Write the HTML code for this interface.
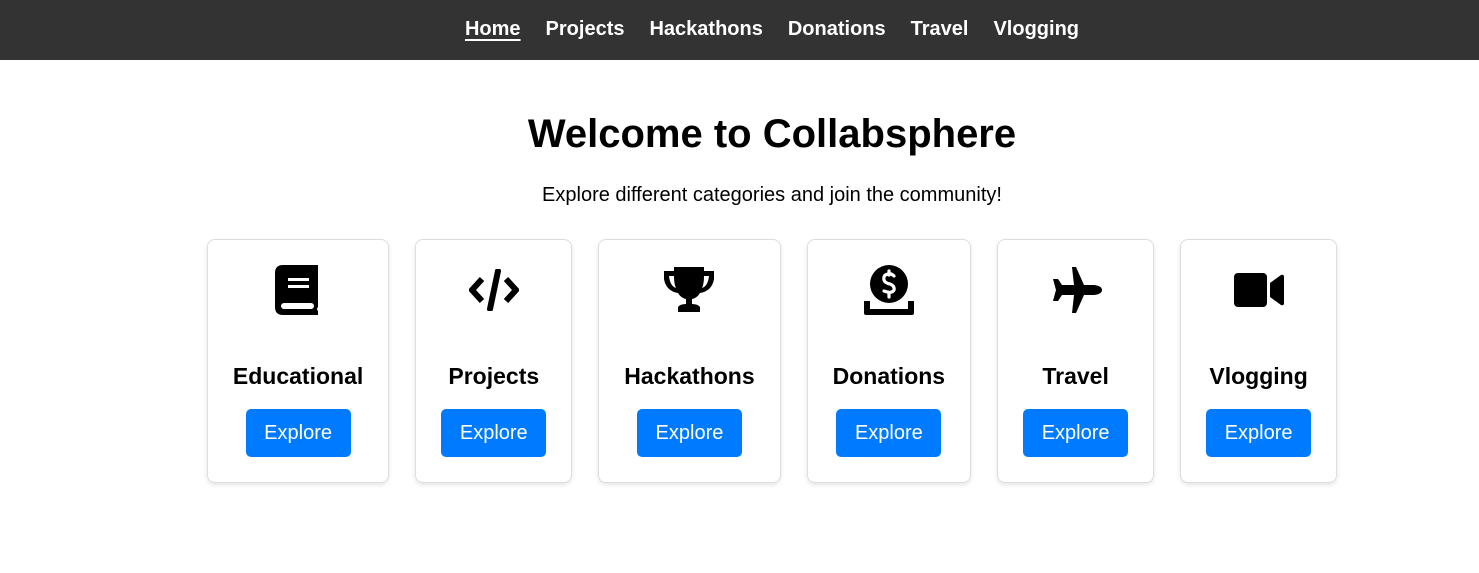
<!DOCTYPE html>
<html><head><meta charset="utf-8"><style>
*{margin:0;padding:0;box-sizing:border-box}
body{width:1479px;height:573px;overflow:hidden;background:#fff;font-family:"Liberation Sans",Arial,sans-serif;color:#000}
nav{height:60px;background:#333;position:relative}
.w{position:absolute;left:0;width:1544px;text-align:center}
nav .w{top:18px;font-size:20px;font-weight:bold;white-space:nowrap}
nav a{color:#fff;text-decoration:none;margin:0 12.5px}
nav a.h{text-decoration:underline;text-underline-offset:4px}
h1{position:absolute;top:112px;font-size:40px;line-height:44px}
p.s{position:absolute;top:184px;font-size:20px;line-height:22px}
.cards{position:absolute;top:239px;left:0;width:1544px;display:flex;justify-content:center;gap:26px}
.c{border:1px solid #ddd;border-radius:8px;box-shadow:0 2px 4px rgba(0,0,0,.1);padding:0 25px 24px;text-align:center;height:244px}
.ic{height:50px;margin-top:25px;display:flex;justify-content:center;align-items:center}
.c h3{font-size:23px;line-height:26px;margin-top:48px;white-space:nowrap}
.b{display:inline-block;margin-top:20px;background:#007bff;color:#fff;font-size:20px;height:48px;line-height:48px;width:105px;border-radius:5px}
</style></head><body>
<nav><div class="w"><a class="h">Home</a><a>Projects</a><a>Hackathons</a><a>Donations</a><a>Travel</a><a>Vlogging</a></div></nav>
<h1 class="w">Welcome to Collabsphere</h1>
<p class="s w">Explore different categories and join the community!</p>
<div class="cards">
<div class="c"><div class="ic"><svg width="46" height="50" viewBox="0 0 46 50"><path d="M8 0H43V42Q41 44 43 46V50H8Q0 50 0 42V8Q0 0 8 0Z"/><rect x="13" y="13" width="21" height="3" fill="#fff"/><rect x="13" y="20" width="21" height="3" fill="#fff"/><rect x="6" y="38" width="33" height="6" rx="3" fill="#fff"/></svg></div><h3>Educational</h3><span class="b">Explore</span></div>
<div class="c"><div class="ic"><svg width="50" height="42" viewBox="0 0 50 42"><path d="M13 10L3 21L13 32" fill="none" stroke="#000" stroke-width="6" stroke-linejoin="miter"/><path d="M37 10L47 21L37 32" fill="none" stroke="#000" stroke-width="6"/><path d="M29 2L21 40" stroke="#000" stroke-width="6" stroke-linecap="round"/></svg></div><h3>Projects</h3><span class="b">Explore</span></div>
<div class="c"><div class="ic"><svg width="50" height="46" viewBox="0 0 50 46"><path d="M10 0H40V4H50V12Q48 24 36 26Q33 31 28 32V37Q34 37 36 40V45H14V40Q16 37 22 37V32Q17 31 14 26Q2 24 0 12V4H10Z"/><path d="M5 9H10Q10 17 12 21Q6 19 5 9ZM45 9H40Q40 17 38 21Q44 19 45 9Z" fill="#fff"/></svg></div><h3>Hackathons</h3><span class="b">Explore</span></div>
<div class="c"><div class="ic"><svg width="50" height="50" viewBox="0 0 50 50"><circle cx="25" cy="19" r="19"/><path d="M0 36H6V44H44V36H50V48Q50 50 48 50H2Q0 50 0 48Z"/><path d="M30 11Q27 8 24 9Q19 10 20 15Q21 18 26 19Q31 21 30 25Q28 29 20 26M25 6V10M25 28V32" fill="none" stroke="#fff" stroke-width="3.2" stroke-linecap="round"/></svg></div><h3>Donations</h3><span class="b">Explore</span></div>
<div class="c"><div class="ic"><svg width="52" height="46" viewBox="0 0 52 46"><path d="M22 0H26L34 18H44Q52 19 52 23Q52 27 44 28H34L26 46H22L24 28H12L8 34H3L6 23L3 12H8L12 18H24Z"/></svg></div><h3>Travel</h3><span class="b">Explore</span></div>
<div class="c"><div class="ic"><svg width="50" height="34" viewBox="0 0 50 34"><rect x="0" y="0" width="33" height="34" rx="4"/><path d="M36 10L47 2Q50 1 50 4V30Q50 33 47 32L36 24Z"/></svg></div><h3>Vlogging</h3><span class="b">Explore</span></div>
</div>
</body></html>
